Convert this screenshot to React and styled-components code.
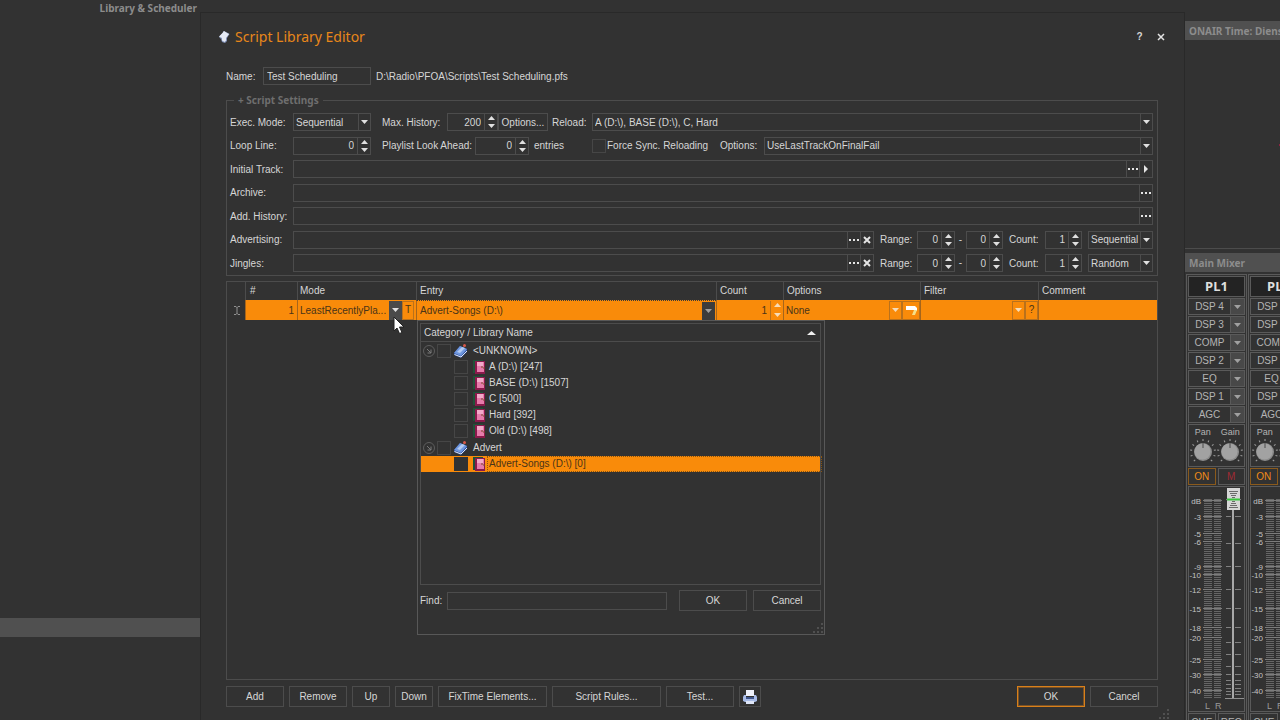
import React from 'react';
import styled, { createGlobalStyle, css } from 'styled-components';

const bg = '#323232';
const line = '#4c4c4c';
const ink = '#d6d6d6';
const orange = '#f98b0a';
const ui = '"Liberation Sans", Arial, sans-serif';
const head = '"Noto Sans", "Open Sans", sans-serif';

const Global = createGlobalStyle`
  *, *::before, *::after { box-sizing: border-box; }
  body { margin: 0; background: ${bg}; color: ${ink}; font: 10px/12px ${ui}; overflow: hidden; }
  button, input, select { font: inherit; color: inherit; margin: 0; outline: none; }
`;

const Page = styled.div`
  display: flex;
  height: 100vh;
  min-height: 720px;
`;

const Library = styled.aside`
  flex: none;
  width: 200px;
  display: flex;
  flex-direction: column;
`;
const LibraryTitle = styled.h2`
  margin: 0;
  padding: 1px 3px;
  height: 18px;
  text-align: right;
  font: bold 10px/14px ${head};
  color: #8c8c8c;
`;
const LibraryList = styled.div`
  flex: 1;
  display: flex;
  flex-direction: column;
  justify-content: flex-end;
  padding-bottom: 83px;
`;
const LibrarySelection = styled.div`
  height: 19px;
  background: #505050;
`;

const Dialog = styled.main`
  flex: 1;
  min-width: 0;
  margin-top: 12px;
  padding: 10px 26px 13px 25px;
  border: 1px solid #292929;
  border-bottom: 0;
  display: flex;
  flex-direction: column;
  position: relative;
`;
const TitleBar = styled.header`
  display: flex;
  align-items: center;
  height: 27px;
  margin: 0 -13px 0 -8px;
`;
const Title = styled.h1`
  margin: 0 0 0 5px;
  flex: 1;
  font: 14px/20px ${head};
  color: #e8871a;
`;
const TitleButton = styled.button`
  width: 21px;
  height: 20px;
  padding: 0;
  border: 0;
  background: none;
  font-weight: bold;
  display: flex;
  align-items: center;
  justify-content: center;
`;

const NameRow = styled.div`
  display: flex;
  align-items: center;
  height: 18px;
  margin-top: 17px;
`;

const Label = styled.label`
  flex: none;
  width: ${p => (p.$w ? p.$w + 'px' : 'auto')};
  margin-left: ${p => p.$gap || 0}px;
  padding-top: 1px;
  white-space: nowrap;
`;

const Field = styled.div`
  display: flex;
  height: 18px;
  min-width: 0;
  border: 1px solid ${line};
  ${p => (p.$w ? css`flex: none; width: ${p.$w}px;` : css`flex: 1;`)}
  margin-left: ${p => p.$gap || 0}px;
`;
const Input = styled.input`
  flex: 1;
  min-width: 0;
  width: 0;
  padding: 1px 3px 0;
  border: 0;
  background: none;
  text-align: ${p => (p.$right ? 'right' : 'left')};
`;
const SelectWrap = styled.div`
  flex: 1;
  min-width: 0;
  display: flex;
  position: relative;
`;
const Select = styled.select`
  flex: 1;
  min-width: 0;
  appearance: none;
  padding: 1px 0 0 2px;
  border: 0;
  border-radius: 0;
  background: none;
`;
const SelectArrow = styled.span`
  position: absolute;
  right: 0;
  top: 0;
  bottom: 0;
  width: 12px;
  border-left: 1px solid ${line};
  display: flex;
  align-items: center;
  justify-content: center;
  pointer-events: none;
`;
const FieldButton = styled.button`
  flex: none;
  width: 13px;
  padding: 0;
  border: 0;
  border-left: 1px solid ${line};
  background: none;
  display: flex;
  align-items: center;
  justify-content: center;
`;
const SpinButtons = styled.div`
  flex: none;
  width: 13px;
  border-left: 1px solid ${p => p.$line || line};
  display: flex;
  flex-direction: column;
`;
const SpinButton = styled.button`
  flex: 1;
  min-height: 0;
  padding: 0;
  border: 0;
  background: none;
  display: flex;
  align-items: center;
  justify-content: center;
`;

const Group = styled.fieldset`
  min-width: 0;
  margin: 9px 0 0;
  padding: 6px 4px 3px 3px;
  border: 1px solid ${line};
`;
const Legend = styled.legend`
  margin-left: 4px;
  padding: 0 4px;
  font: bold 10px/13px ${head};
  color: #6e6e6e;
`;
const GroupRows = styled.div`
  display: flex;
  flex-direction: column;
  justify-content: space-between;
  height: 159px;
`;
const Row = styled.div`
  display: flex;
  align-items: center;
  height: 18px;
`;
const PlainButton = styled.button`
  flex: none;
  height: ${p => p.$h || 21}px;
  width: ${p => p.$w}px;
  padding: 1px 0 0;
  border: 1px solid ${p => (p.$primary ? '#d9801a' : line)};
  ${p => p.$primary && css`box-shadow: inset 0 0 0 1px #7a5226;`}
  background: none;
  display: flex;
  align-items: center;
  justify-content: center;
`;
const Check = styled.input`
  appearance: none;
  flex: none;
  width: 14px;
  height: 14px;
  border: 1px solid ${p => (p.$solid ? bg : '#464646')};
  background: ${bg};
  margin-left: ${p => p.$gap || 0}px;
`;
const Dash = styled.span`
  width: 11px;
  text-align: center;
`;

const GridBox = styled.div`
  flex: 1;
  margin-top: 5px;
  border: 1px solid ${line};
`;
const Grid = styled.table`
  width: 100%;
  table-layout: fixed;
  border-collapse: separate;
  border-spacing: 0;
`;
const Th = styled.th`
  height: 18px;
  padding: 0 0 0 ${p => p.$pad || 3}px;
  border-left: 1px solid ${p => (p.$first ? bg : line)};
  text-align: left;
  font-weight: normal;
`;
const Td = styled.td`
  height: 20px;
  padding: 0;
  position: relative;
  border-left: 1px solid ${p => (p.$plain ? bg : '#a5651c')};
  ${p => !p.$plain && css`background: ${orange}; color: #4a3418;`}
  ${p => p.$focus && css`border-top: 1px dotted #3a3a3a;`}
`;
const Cell = styled.div`
  display: flex;
  height: ${p => (p.$short ? 18 : 19)}px;
`;
const CellButton = styled.button`
  flex: none;
  width: ${p => p.$w || 12}px;
  padding: 0;
  border: 1px solid #b9711c;
  margin-right: ${p => p.$mr || 0}px;
  background: ${p => p.$fill || 'none'};
  ${p => p.$fill && css`border-color: ${p.$fill};`}
  display: flex;
  align-items: center;
  justify-content: center;
`;
const Indicator = styled.div`
  display: flex;
  align-items: center;
  justify-content: center;
`;

const Popup = styled.section`
  position: absolute;
  z-index: 2;
  left: 0;
  top: 19px;
  width: 408px;
  height: 315px;
  padding: 2px 3px 2px 2px;
  border: 1px solid #585858;
  background: ${bg};
  color: ${ink};
  display: flex;
  flex-direction: column;
`;
const TreeBox = styled.div`
  flex: none;
  height: 262px;
  border: 1px solid ${line};
`;
const TreeHead = styled.div`
  display: flex;
  align-items: center;
  justify-content: space-between;
  height: 18px;
  padding: 0 4px 0 3px;
  border-bottom: 1px solid ${line};
`;
const TreeList = styled.ul`
  list-style: none;
  margin: 0;
  padding: 0;
`;
const TreeRow = styled.label`
  display: flex;
  align-items: center;
  height: ${p => (p.$parent ? 17 : 16)}px;
  padding-left: ${p => (p.$parent ? 2 : 33)}px;
  ${p => p.$selected && css`background: ${orange}; color: #4a3418;`}
  svg { flex: none; margin-left: ${p => (p.$parent ? 3 : 5)}px; }
  svg:first-child { margin-left: 0; }
`;
const TreeText = styled.span`
  margin-left: ${p => (p.$parent ? 5 : 3)}px;
  flex: 1;
  ${p => p.$focus && css`outline: 1px dotted #8a5410; outline-offset: 1px;`}
`;
const PopupFoot = styled.div`
  display: flex;
  align-items: center;
  height: 21px;
  margin-top: 5px;
`;
const Grip = styled.svg`
  position: absolute;
  right: ${p => p.$r}px;
  bottom: ${p => p.$b}px;
`;

const Footer = styled.footer`
  display: flex;
  align-items: center;
  gap: 5px;
  margin-top: 6px;
`;
const Spacer = styled.div`
  flex: 1;
`;
const Pair = styled.div`
  display: flex;
  gap: 6px;
`;
const Pointer = styled.svg`
  position: absolute;
  z-index: 5;
  left: 95px;
  top: 16px;
`;

const Side = styled.aside`
  flex: none;
  width: 95px;
  padding-top: 21px;
  display: flex;
  flex-direction: column;
  overflow: hidden;
`;
const PanelTitle = styled.h2`
  flex: none;
  margin: 0;
  height: 19px;
  padding-left: 4px;
  background: #505050;
  color: #8c8c8c;
  font: bold 10px/20px ${head};
  white-space: nowrap;
`;
const ClockPanel = styled.div`
  flex: none;
  height: 209px;
  margin-bottom: 4px;
  padding: 104px 0 0;
  border-bottom: 1px solid ${line};
  display: flex;
  justify-content: flex-end;
`;
const ClockDot = styled.i`
  width: 1px;
  height: 2px;
  background: #8e2340;
`;
const Strips = styled.div`
  display: flex;
  gap: 1px;
  padding: 2px 0 0 1px;
`;
const Strip = styled.section`
  flex: none;
  width: 61px;
  padding: 1px;
  border: 1px solid #5a5a5a;
  color: #b4b4b4;
`;
const StripName = styled.h3`
  margin: 0 0 1px;
  height: 21px;
  border: 1px solid #5a5a5a;
  background: #232323;
  text-align: center;
  font: bold 13px/19px ${head};
  color: #dedede;
`;
const Effect = styled.div`
  display: flex;
  height: 17px;
  margin-bottom: 1px;
  border: 1px solid #5a5a5a;
`;
const EffectName = styled.button`
  flex: 1;
  padding: 0;
  border: 0;
  background: none;
`;
const EffectMenu = styled.button`
  flex: none;
  width: 14px;
  padding: 0;
  border: 0;
  border-left: 1px solid #5a5a5a;
  background: #484848;
  display: flex;
  align-items: center;
  justify-content: center;
`;
const Knobs = styled.div`
  display: flex;
  height: 43px;
  padding-top: 2px;
  border: 1px solid #5a5a5a;
`;
const Knob = styled.div`
  flex: 1;
  min-width: 0;
  display: flex;
  flex-direction: column;
  align-items: center;
  font-size: 9px;
  line-height: 11px;
  svg { flex: none; }
`;
const Toggles = styled.div`
  display: flex;
  gap: 2px;
  margin: 1px 0;
`;
const Toggle = styled.button`
  flex: 1;
  height: ${p => p.$h || 17}px;
  padding: 0;
  border: 1px solid ${p => (p.$on ? '#8a5a1c' : '#5a5a5a')};
  background: none;
  color: ${p => p.$c || 'inherit'};
`;
const MeterBox = styled.div`
  height: 226px;
  border: 1px solid #5a5a5a;
`;

const Down = ({ c = '#e0e0e0' }) => (
  <svg width="7" height="4" viewBox="0 0 7 4"><path d="M0 0h7L3.500 4z" fill={c} /></svg>
);
const Up = ({ c = '#e0e0e0', w = 7 }) => (
  <svg width={w} height="4" viewBox="0 0 7 4" preserveAspectRatio="none"><path d="M0 4h7L3.500 0z" fill={c} /></svg>
);
const Dots = () => (
  <svg width="10" height="2" viewBox="0 0 10 2"><path d="M0 0h2v2H0zM4 0h2v2H4zM8 0h2v2H8z" fill="#e4e4e4" /></svg>
);
const Cross = ({ s = 2 }) => (
  <svg width="8" height="8" viewBox="0 0 8 8"><path d="M1 1l6 6M7 1L1 7" stroke="#e4e4e4" strokeWidth={s} /></svg>
);

const Spin = ({ w, gap, value, label, id }) => (
  <Field $w={w} $gap={gap}>
    <Input id={id} $right defaultValue={value} aria-label={label} />
    <SpinButtons>
      <SpinButton aria-label={'Increase ' + label}><Up /></SpinButton>
      <SpinButton aria-label={'Decrease ' + label}><Down /></SpinButton>
    </SpinButtons>
  </Field>
);
const Combo = ({ w, gap, value, label, id }) => (
  <Field $w={w} $gap={gap}>
    <SelectWrap>
      <Select id={id} aria-label={label}><option>{value}</option></Select>
      <SelectArrow><Down /></SelectArrow>
    </SelectWrap>
  </Field>
);

const ScriptIcon = () => (
  <svg width="12" height="14" viewBox="0 0 12 14">
    <path d="M1 7L5 2.500 5.500 1 9 2.500 11.500 4 9 8v3l-2 2-3-1-1-3z" fill="#8393ba" />
    <path d="M1 6.500L4.500 3 6 1l3 2 2 1-3 4v2.500L6.500 12 4 10.500V8z" fill="#e6eaf5" />
  </svg>
);
const BookIcon = () => (
  <svg width="14" height="14" viewBox="0 0 14 14">
    <path d="M0 9L6 2l7 3v3L7 14l-7-3z" fill="#2c4f9e" />
    <path d="M0 9l6-7 7 3-6 7z" fill="#6f97df" />
    <path d="M3 8l5-5 3 1-5 5z" fill="#b4cbf3" />
    <path d="M0.500 10.500L7 13l6-6" stroke="#dfe6f3" fill="none" />
    <circle cx="10.500" cy="1.500" r="1.500" fill="#d8594a" />
  </svg>
);
const LibIcon = () => (
  <svg width="13" height="14" viewBox="0 0 13 14">
    <path d="M0 0h10v2H2v11H0z" fill="#1f5238" />
    <path d="M2 1h10v13H2z" fill="#8a1a4c" />
    <path d="M4 2h7v10H4z" fill="#e67bab" />
    <path d="M4 2h6v4H4z" fill="#f2a9c8" />
    <path d="M8 7h2M10 8h2" stroke="#7a4a2a" />
  </svg>
);
const Expander = () => (
  <svg width="12" height="12" viewBox="0 0 12 12" fill="none" stroke="#5e5e5e">
    <circle cx="6" cy="6" r="5.500" />
    <path d="M4 4l4 4M8 4.500V8H4.500" stroke="#7a7a7a" />
  </svg>
);
const Printer = () => (
  <svg width="14" height="15" viewBox="0 0 14 15">
    <path d="M3 0h8v6H3z" fill="#eef1fb" />
    <path d="M1 5h2v2h8V5h2l1 2v4l-2 1H2l-2-1V7z" fill="#a9bce8" />
    <path d="M3 7h8v2H3z" fill="#3e558c" />
    <path d="M3 11h8v3H3z" fill="#dfe6f8" />
  </svg>
);
const GripDots = ({ r, b }) => (
  <Grip $r={r} $b={b} width="10" height="10" viewBox="0 0 10 10">
    <path d="M8 0h2v2H8zM4 4h2v2H4zM8 4h2v2H8zM0 8h2v2H0zM4 8h2v2H4zM8 8h2v2H8z" fill="#505050" />
  </Grip>
);
const KnobDial = () => (
  <svg width="28" height="26" viewBox="0 0 28 26">
    {[-135, -108, -81, -54, -27, 0, 27, 54, 81, 108, 135].map(a => (
      <path key={a} d="M14 1v2" stroke="#a0a0a0" transform={`rotate(${a} 14 14)`} />
    ))}
    <circle cx="14" cy="14" r="9" fill="#8c8c8c" />
    <circle cx="13.500" cy="13.500" r="8" fill="#a2a2a2" />
    <path d="M14 5v5" stroke="#4a4a4a" />
  </svg>
);

const marks = [
  ['dB', 14], ['-3', 30], ['-5', 47], ['-6', 55], ['-9', 80], ['-10', 88], ['-12', 103],
  ['-15', 122], ['-18', 141], ['-20', 151], ['-25', 173], ['-30', 188], ['-40', 204],
];
const faderTicks = [13, 30, 57, 80, 103, 122, 141, 156, 168, 180, 188, 194, 198, 202, 205, 208];
const Meter = () => (
  <svg width="55" height="224" viewBox="0 0 55 224">
    {Array.from({ length: 100 }, (_, i) => (
      <path key={i} d={`M15 ${12.5 + i * 2}h8M25 ${12.5 + i * 2}h7`} stroke="#666" />
    ))}
    {marks.map(([t, y]) => (
      <g key={t}>
        <text x="12" y={y + 3} textAnchor="end" fontSize="8" fill="#c4c4c4">{t}</text>
        <path d={`M14 ${y - 0.5}h19`} stroke="#7c7c7c" />
      </g>
    ))}
    {faderTicks.map(y => (
      <path key={y} d={`M37 ${y - 0.5}h15`} stroke="#808080" />
    ))}
    <path d="M36 211.500h19" stroke="#909090" />
    <path d="M44 4v207" stroke="#323232" strokeWidth="4" />
    <path d="M44 4v207" stroke="#a8a8a8" strokeWidth="2" />
    <path d="M38 1h13v22H38z" fill="#d6d6d6" />
    <path d="M40 4.500h9M41 6.500h7M42 8.500h5M43 10.500h3M43 14.500h3M42 16.500h5M41 18.500h7M40 20.500h9" stroke="#6a6a6a" />
    <path d="M38 12.500h13" stroke="#38c43c" strokeWidth="2" />
    <text x="16" y="222" fontSize="9" fill="#9a9a9a">L</text>
    <text x="26" y="222" fontSize="9" fill="#9a9a9a">R</text>
  </svg>
);

const ChannelStrip = ({ name }) => (
  <Strip>
    <StripName>{name}</StripName>
    {['DSP 4', 'DSP 3', 'COMP', 'DSP 2', 'EQ', 'DSP 1', 'AGC'].map(e => (
      <Effect key={e}>
        <EffectName>{e}</EffectName>
        <EffectMenu aria-label={e + ' menu'}><Down c="#a0a0a0" /></EffectMenu>
      </Effect>
    ))}
    <Knobs>
      <Knob>Pan<KnobDial /></Knob>
      <Knob>Gain<KnobDial /></Knob>
    </Knobs>
    <Toggles>
      <Toggle $on $c="#f08a18">ON</Toggle>
      <Toggle $c="#a02a34">M</Toggle>
    </Toggles>
    <MeterBox><Meter /></MeterBox>
    <Toggles>
      <Toggle $h={19}>CUE</Toggle>
      <Toggle $h={19}>REC</Toggle>
    </Toggles>
  </Strip>
);

const tree = [
  { name: '<UNKNOWN>', items: ['A (D:\\) [247]', 'BASE (D:\\) [1507]', 'C [500]', 'Hard [392]', 'Old (D:\\) [498]'] },
  { name: 'Advert', items: ['Advert-Songs (D:\\) [0]'], selected: true },
];

const EntryPopup = () => (
  <Popup>
    <TreeBox>
      <TreeHead>Category / Library Name<Up c="#f0f0f0" w={9} /></TreeHead>
      <TreeList>
        {tree.map(g => (
          <li key={g.name}>
            <TreeRow $parent>
              <Expander />
              <Check type="checkbox" $gap={2} />
              <BookIcon />
              <TreeText $parent>{g.name}</TreeText>
            </TreeRow>
            <TreeList>
              {g.items.map(i => (
                <li key={i}>
                  <TreeRow $selected={g.selected}>
                    <Check type="checkbox" $solid={g.selected} />
                    <LibIcon />
                    <TreeText $focus={g.selected}>{i}</TreeText>
                  </TreeRow>
                </li>
              ))}
            </TreeList>
          </li>
        ))}
      </TreeList>
    </TreeBox>
    <PopupFoot>
      <Label htmlFor="find" $w={27}>Find:</Label>
      <Field $w={220}><Input id="find" /></Field>
      <Spacer />
      <Pair>
        <PlainButton $w={68}>OK</PlainButton>
        <PlainButton $w={68}>Cancel</PlainButton>
      </Pair>
    </PopupFoot>
    <GripDots r={1} b={1} />
  </Popup>
);

const SourceRow = ({ label, id, order }) => (
  <Row>
    <Label htmlFor={id} $w={63}>{label}:</Label>
    <Field>
      <Input id={id} />
      <FieldButton aria-label={'Browse ' + label}><Dots /></FieldButton>
      <FieldButton aria-label={'Clear ' + label}><Cross /></FieldButton>
    </Field>
    <Label htmlFor={id + '-from'} $gap={6} $w={37}>Range:</Label>
    <Spin id={id + '-from'} w={38} value="0" label="range start" />
    <Dash>-</Dash>
    <Spin w={37} value="0" label="range end" />
    <Label htmlFor={id + '-count'} $gap={6} $w={36}>Count:</Label>
    <Spin id={id + '-count'} w={37} value="1" label="count" />
    <Combo w={65} gap={6} value={order} label="order" />
  </Row>
);

export default function App() {
  return (
    <>
      <Global />
      <Page>
        <Library>
          <LibraryTitle>Library &amp; Scheduler</LibraryTitle>
          <LibraryList><LibrarySelection /></LibraryList>
        </Library>

        <Dialog>
          <TitleBar>
            <ScriptIcon />
            <Title>Script Library Editor</Title>
            <TitleButton aria-label="Help">?</TitleButton>
            <TitleButton aria-label="Close"><Cross s={1.5} /></TitleButton>
          </TitleBar>

          <NameRow>
            <Label htmlFor="name" $w={37}>Name:</Label>
            <Field $w={108}><Input id="name" defaultValue="Test Scheduling" /></Field>
            <Label as="span" $gap={5}>D:\Radio\PFOA\Scripts\Test Scheduling.pfs</Label>
          </NameRow>

          <Group>
            <Legend>+ Script Settings</Legend>
            <GroupRows>
              <Row>
                <Label htmlFor="exec" $w={63}>Exec. Mode:</Label>
                <Combo id="exec" w={78} value="Sequential" />
                <Label htmlFor="hist" $gap={11} $w={65}>Max. History:</Label>
                <Spin id="hist" w={51} value="200" label="history" />
                <PlainButton $w={50} $h={18}>Options...</PlainButton>
                <Label htmlFor="reload" $gap={4} $w={40}>Reload:</Label>
                <Combo id="reload" value="A (D:\), BASE (D:\), C, Hard" />
              </Row>
              <Row>
                <Label htmlFor="loop" $w={63}>Loop Line:</Label>
                <Spin id="loop" w={78} value="0" label="loop line" />
                <Label htmlFor="ahead" $gap={11} $w={93}>Playlist Look Ahead:</Label>
                <Spin id="ahead" w={54} value="0" label="look ahead" />
                <Label as="span" $gap={5} $w={58}>entries</Label>
                <Check type="checkbox" id="force" />
                <Label htmlFor="force" $gap={1} $w={113}>Force Sync. Reloading</Label>
                <Label htmlFor="opts" $w={44}>Options:</Label>
                <Combo id="opts" value="UseLastTrackOnFinalFail" />
              </Row>
              <Row>
                <Label htmlFor="initial" $w={63}>Initial Track:</Label>
                <Field>
                  <Input id="initial" />
                  <FieldButton aria-label="Browse initial track"><Dots /></FieldButton>
                  <FieldButton aria-label="Play initial track">
                    <svg width="4" height="8" viewBox="0 0 4 8"><path d="M0 0v8l4-4z" fill="#e4e4e4" /></svg>
                  </FieldButton>
                </Field>
              </Row>
              <Row>
                <Label htmlFor="archive" $w={63}>Archive:</Label>
                <Field>
                  <Input id="archive" />
                  <FieldButton aria-label="Browse archive"><Dots /></FieldButton>
                </Field>
              </Row>
              <Row>
                <Label htmlFor="addhist" $w={63}>Add. History:</Label>
                <Field>
                  <Input id="addhist" />
                  <FieldButton aria-label="Browse history"><Dots /></FieldButton>
                </Field>
              </Row>
              <SourceRow label="Advertising" id="adv" order="Sequential" />
              <SourceRow label="Jingles" id="jingles" order="Random" />
            </GroupRows>
          </Group>

          <GridBox>
            <Grid>
              <colgroup>
                <col style={{ width: 18 }} />
                <col style={{ width: 52 }} />
                <col style={{ width: 119 }} />
                <col />
                <col style={{ width: 67 }} />
                <col style={{ width: 137 }} />
                <col style={{ width: 118 }} />
                <col style={{ width: 119 }} />
              </colgroup>
              <thead>
                <tr>
                  <Th $first aria-label="Row state" />
                  <Th $pad={4}>#</Th>
                  <Th $pad={2}>Mode</Th>
                  <Th>Entry</Th>
                  <Th>Count</Th>
                  <Th>Options</Th>
                  <Th>Filter</Th>
                  <Th>Comment</Th>
                </tr>
              </thead>
              <tbody>
                <tr>
                  <Td $plain>
                    <Indicator>
                      <svg width="6" height="9" viewBox="0 0 6 9" stroke="#909090" fill="none">
                        <path d="M0 .5h2l1 1 1-1h2M3 1v7M0 8.500h2l1-1 1 1h2" />
                      </svg>
                    </Indicator>
                  </Td>
                  <Td>
                    <Cell><Input $right aria-label="Number" defaultValue="1" /></Cell>
                  </Td>
                  <Td>
                    <Cell>
                      <Select aria-label="Mode"><option>LeastRecentlyPla...</option></Select>
                      <CellButton $fill="#4a4a4a" $w={13} aria-label="Open mode list"><Down /></CellButton>
                      <CellButton $mr={2}>T</CellButton>
                    </Cell>
                    <Pointer width="12" height="19" viewBox="0 0 12 19">
                      <path d="M1 1v14l3-3 2.500 5.500 2.500-1L6.500 11H11z" fill="#fff" stroke="#222" />
                    </Pointer>
                  </Td>
                  <Td $focus>
                    <Cell $short>
                      <Input aria-label="Entry" defaultValue="Advert-Songs (D:\)" />
                      <CellButton $fill="#3c3c3c" $w={13} $mr={1} aria-label="Open entry list"><Down c="#a0a0a0" /></CellButton>
                    </Cell>
                    <EntryPopup />
                  </Td>
                  <Td>
                    <Cell>
                      <Input $right aria-label="Count" defaultValue="1" />
                      <SpinButtons $line="#b9711c">
                        <SpinButton aria-label="Increase count"><Up c="#f6dcb8" /></SpinButton>
                        <SpinButton aria-label="Decrease count"><Down c="#f6dcb8" /></SpinButton>
                      </SpinButtons>
                    </Cell>
                  </Td>
                  <Td>
                    <Cell>
                      <Select aria-label="Options"><option>None</option></Select>
                      <CellButton $w={13} aria-label="Open options list"><Down c="#f6dcb8" /></CellButton>
                      <CellButton $w={18} aria-label="Edit options">
                        <svg width="11" height="9" viewBox="0 0 11 9">
                          <path d="M0 0h9l2 2v3H8V4H0z" fill="#fff" />
                          <path d="M8 4h3l-2 5H6z" fill="#f4e08a" />
                        </svg>
                      </CellButton>
                    </Cell>
                  </Td>
                  <Td>
                    <Cell>
                      <Input aria-label="Filter" />
                      <CellButton $w={13} aria-label="Open filter list"><Down c="#f6dcb8" /></CellButton>
                      <CellButton $w={13}>?</CellButton>
                    </Cell>
                  </Td>
                  <Td><Cell><Input aria-label="Comment" /></Cell></Td>
                </tr>
              </tbody>
            </Grid>
          </GridBox>

          <Footer>
            <PlainButton $w={58}>Add</PlainButton>
            <PlainButton $w={58}>Remove</PlainButton>
            <PlainButton $w={38}>Up</PlainButton>
            <PlainButton $w={38}>Down</PlainButton>
            <PlainButton $w={109}>FixTime Elements...</PlainButton>
            <PlainButton $w={109}>Script Rules...</PlainButton>
            <PlainButton $w={68}>Test...</PlainButton>
            <PlainButton $w={22} aria-label="Print"><Printer /></PlainButton>
            <Spacer />
            <PlainButton $w={68} $primary>OK</PlainButton>
            <PlainButton $w={68}>Cancel</PlainButton>
          </Footer>
          <GripDots r={15} b={1} />
        </Dialog>

        <Side>
          <PanelTitle>ONAIR Time: Dienstag</PanelTitle>
          <ClockPanel><ClockDot /></ClockPanel>
          <PanelTitle>Main Mixer</PanelTitle>
          <Strips>
            <ChannelStrip name="PL1" />
            <ChannelStrip name="PL2" />
          </Strips>
        </Side>
      </Page>
    </>
  );
}
